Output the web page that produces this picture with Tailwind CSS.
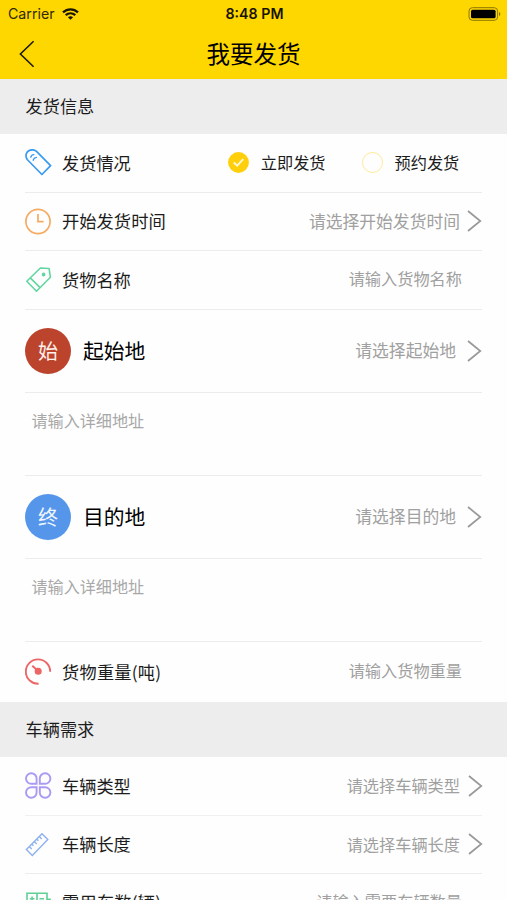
<!DOCTYPE html>
<html lang="zh-CN">
<head>
<meta charset="utf-8">
<title>我要发货</title>
<script src="https://cdn.jsdelivr.net/npm/@tailwindcss/browser@4"></script>
</head>
<body class="bg-[#fefefe] font-['Noto_Sans_CJK_SC',sans-serif] text-[#1c1c1c] w-[507px] h-[900px] overflow-hidden leading-none">
<svg class="hidden">
  <symbol id="chev" viewBox="0 0 16 24"><path d="M2 2 14.3 12 2 22" fill="none" stroke="#999" stroke-width="1.7"/></symbol>
</svg>

<header class="h-[79px] bg-[#ffd700] text-black">
  <div class="h-7 grid grid-cols-3 items-center pl-2 pr-[6px]">
    <div class="flex items-center gap-[7px]">
      <span class="font-[Inter,sans-serif] text-[14.2px] text-[#2e2805]">Carrier</span>
      <svg class="w-[17px] h-[12px]" viewBox="0 0 17 12" fill="none" stroke="#1a1600" stroke-width="2.3"><path d="M1 4.4C5.3.3 11.7.3 16 4.4M3.7 7.2c2.8-2.5 6.8-2.5 9.6 0"/><path d="M8.5 11.8 5.9 9.3c1.5-1.3 3.7-1.3 5.2 0z" fill="#1a1600" stroke="none"/></svg>
    </div>
    <span class="font-[Inter,sans-serif] text-[14.2px] font-semibold text-center whitespace-nowrap pt-px text-[#171300]">8:48 PM</span>
    <svg class="w-[33px] h-[14px] justify-self-end" viewBox="0 0 33 14"><rect x="1" y=".7" width="28.6" height="12.6" rx="3.4" fill="none" stroke="#8c7600" stroke-width="1"/><rect x="3" y="2.7" width="24.6" height="8.6" rx="1.6"/><path d="M31 5v4q1.4-.6 1.4-2T31 5z" fill="#8c7600"/></svg>
  </div>
  <div class="h-[51px] grid grid-cols-[60px_1fr_60px] items-center">
    <svg class="w-4 h-7 ml-[19px]" viewBox="0 0 16 28"><path d="M14.6 1.2 1.4 14l13.2 12.8" fill="none" stroke="#1f1b00" stroke-width="1.6"/></svg>
    <h1 class="text-[23.5px] text-center">我要发货</h1>
  </div>
</header>

<h2 class="h-[55px] bg-[#ededed] flex items-center px-[25.5px] pb-px text-[17.2px]">发货信息</h2>
<section class="mx-[25px]">
  <div class="h-[58.5px] flex items-center border-b-[1.5px] border-[#ececec]">
    <svg class="w-[27px] h-[27px] mr-[10px]" viewBox="0 0 27 27" fill="none" stroke="#3b9af0" stroke-width="1.7" stroke-linejoin="round"><path d="M2.2 10.5C-.2 6.5 1.2 2.8 4.4 1.4 6.7.5 9.5.8 11.5 2.4L25.6 16.6 16.9 25.5z"/><path d="M5.8 8.2Q6.2 5.8 8.8 5.6M8.2 11.2Q8.8 8.8 11.4 8.4" stroke-width="1.4" stroke-linecap="round"/></svg>
    <span class="text-[17.2px]">发货情况</span>
    <svg class="w-[21px] h-[21px] ml-[97px] mr-3" viewBox="0 0 21 21"><circle cx="10.5" cy="10.5" r="10.4" fill="#fecf0a"/><path d="m5.8 10.5 3.4 3.2 6-6.6" fill="none" stroke="#fff8d8" stroke-width="1.9"/></svg>
    <span class="text-[16.2px] pb-px">立即发货</span>
    <span class="w-[21px] h-[21px] rounded-full border border-[#ffe996] ml-9 mr-3"></span>
    <span class="text-[16.2px] pb-px">预约发货</span>
  </div>
  <div class="h-[58.5px] flex items-center border-b-[1.5px] border-[#ececec]">
    <svg class="w-[27px] h-[27px] mr-[10px]" viewBox="0 0 27 27" fill="none" stroke="#f6ab62" stroke-width="1.7"><circle cx="13" cy="13.5" r="12.1"/><path d="M13 6v7.6h5.6"/></svg>
    <span class="text-[17.3px] pb-px">开始发货时间</span>
    <span class="ml-auto text-[16.8px] text-[#a0a0a0]">请选择开始发货时间</span>
    <svg class="w-4 h-6 ml-[6px]"><use href="#chev"/></svg>
  </div>
  <div class="h-[58.5px] flex items-center border-b-[1.5px] border-[#ececec]">
    <svg class="w-[27px] h-[27px] mr-[10px]" viewBox="0 0 27 27" fill="none" stroke="#62d6a0" stroke-width="1.6" stroke-linejoin="round"><path d="M1.8 15.3 15.4 2l8.7.5 1.3 8.8L11.5 25.2zM5.3 11.9l9.8 9.7"/><circle cx="18.6" cy="8.5" r="1.1" fill="#62d6a0"/></svg>
    <span class="text-[17.2px]">货物名称</span>
    <span class="ml-auto mr-5 pb-[3px] text-[16.2px] text-[#a0a0a0]">请输入货物名称</span>
  </div>
  <div class="h-[83px] flex items-center border-b-[1.5px] border-[#ececec]">
    <span class="w-[46px] h-[46px] rounded-full bg-[#bc442c] text-[#fff1ec] text-[20px] flex items-center justify-center mr-3">始</span>
    <span class="text-[20.8px] text-black">起始地</span>
    <span class="ml-auto text-[16.8px] text-[#a0a0a0]">请选择起始地</span>
    <svg class="w-4 h-6 ml-[10px]"><use href="#chev"/></svg>
  </div>
  <div class="h-[83px] px-[6.5px] pt-[19px] text-[16.1px] text-[#a8a8a8] border-b-[1.5px] border-[#ececec]">请输入详细地址</div>
  <div class="h-[83px] flex items-center border-b-[1.5px] border-[#ececec]">
    <span class="w-[46px] h-[46px] rounded-full bg-[#5696ea] text-[#f0f6ff] text-[20px] flex items-center justify-center mr-3">终</span>
    <span class="text-[20.8px] text-black">目的地</span>
    <span class="ml-auto text-[16.8px] text-[#a0a0a0]">请选择目的地</span>
    <svg class="w-4 h-6 ml-[10px]"><use href="#chev"/></svg>
  </div>
  <div class="h-[83px] px-[6.5px] pt-[19px] text-[16.1px] text-[#a8a8a8] border-b-[1.5px] border-[#ececec]">请输入详细地址</div>
  <div class="h-[60.5px] flex items-center">
    <svg class="w-[27px] h-[27px] mr-[10px]" viewBox="0 0 27 27" fill="none" stroke="#ee6565" stroke-width="1.9"><path d="M25.2 13.8A12.2 12.2 0 1 0 13.6 25.8"/><circle cx="13.2" cy="13.3" r="2.6" fill="#ee6565"/><path d="M7.3 7.8l5.5 5"/></svg>
    <span class="text-[17.2px] tracking-[0.25px]">货物重量(吨)</span>
    <span class="ml-auto mr-5 pb-[3px] text-[16.2px] text-[#a0a0a0]">请输入货物重量</span>
  </div>
</section>

<h2 class="h-[55px] bg-[#ededed] flex items-center px-[25.5px] pb-px text-[17.2px]">车辆需求</h2>
<section class="mx-[25px]">
  <div class="h-[58.5px] flex items-center border-b-[1.5px] border-[#f0f0f0]">
    <svg class="w-[27px] h-[27px] mr-[10px]" viewBox="0 0 27 27" fill="none" stroke="#aa9af4" stroke-width="1.9"><path d="M11.6 11.8H6.5A5.3 5.3 0 1 1 11.6 6.5zM14.8 11.8h5.1A5.3 5.3 0 1 0 14.8 6.5zM11.6 15.2H6.5a5.3 5.3 0 1 0 5.1 5.3zM14.8 15.2h5.1a5.3 5.3 0 1 1-5.1 5.3z"/></svg>
    <span class="text-[17.2px] pb-px">车辆类型</span>
    <span class="ml-auto pb-px text-[16.2px] text-[#a0a0a0]">请选择车辆类型</span>
    <svg class="w-4 h-6 ml-[7px] -mr-px"><use href="#chev"/></svg>
  </div>
  <div class="h-[58.5px] flex items-center border-b-[1.5px] border-[#ececec]">
    <svg class="w-[27px] h-[27px] mr-[10px]" viewBox="0 0 27 27" fill="none" stroke="#8db1ef" stroke-width="1.4"><path d="M1.4 18.6 17 2.8l5.8 5.6L7.3 24.4zM4.3 15.6l2.4 2.4M6.8 13.1l1.6 1.6M9.3 10.6l2.4 2.4M11.8 8.1l1.6 1.6M14.3 5.6l2.4 2.4"/></svg>
    <span class="text-[17.2px] pb-px">车辆长度</span>
    <span class="ml-auto text-[16.2px] text-[#a0a0a0]">请选择车辆长度</span>
    <svg class="w-4 h-6 ml-[7px] -mr-px"><use href="#chev"/></svg>
  </div>
  <div class="h-[56px] flex items-center">
    <svg class="w-[27px] h-[27px] mr-[10px]" viewBox="0 0 27 27" fill="none" stroke="#5fcf96" stroke-width="1.6"><path d="M2 4.2h20v6h3v14H2zM12 4.2v20M4.8 9.7h4.6M7.1 7.4V12M14.5 9.7H19M2 14.5h20"/></svg>
    <span class="text-[17.2px] tracking-[0.25px] pb-px">需用车数(辆)</span>
    <span class="ml-auto mr-5 pb-px text-[16.2px] text-[#a0a0a0]">请输入需要车辆数量</span>
  </div>
</section>
</body>
</html>
